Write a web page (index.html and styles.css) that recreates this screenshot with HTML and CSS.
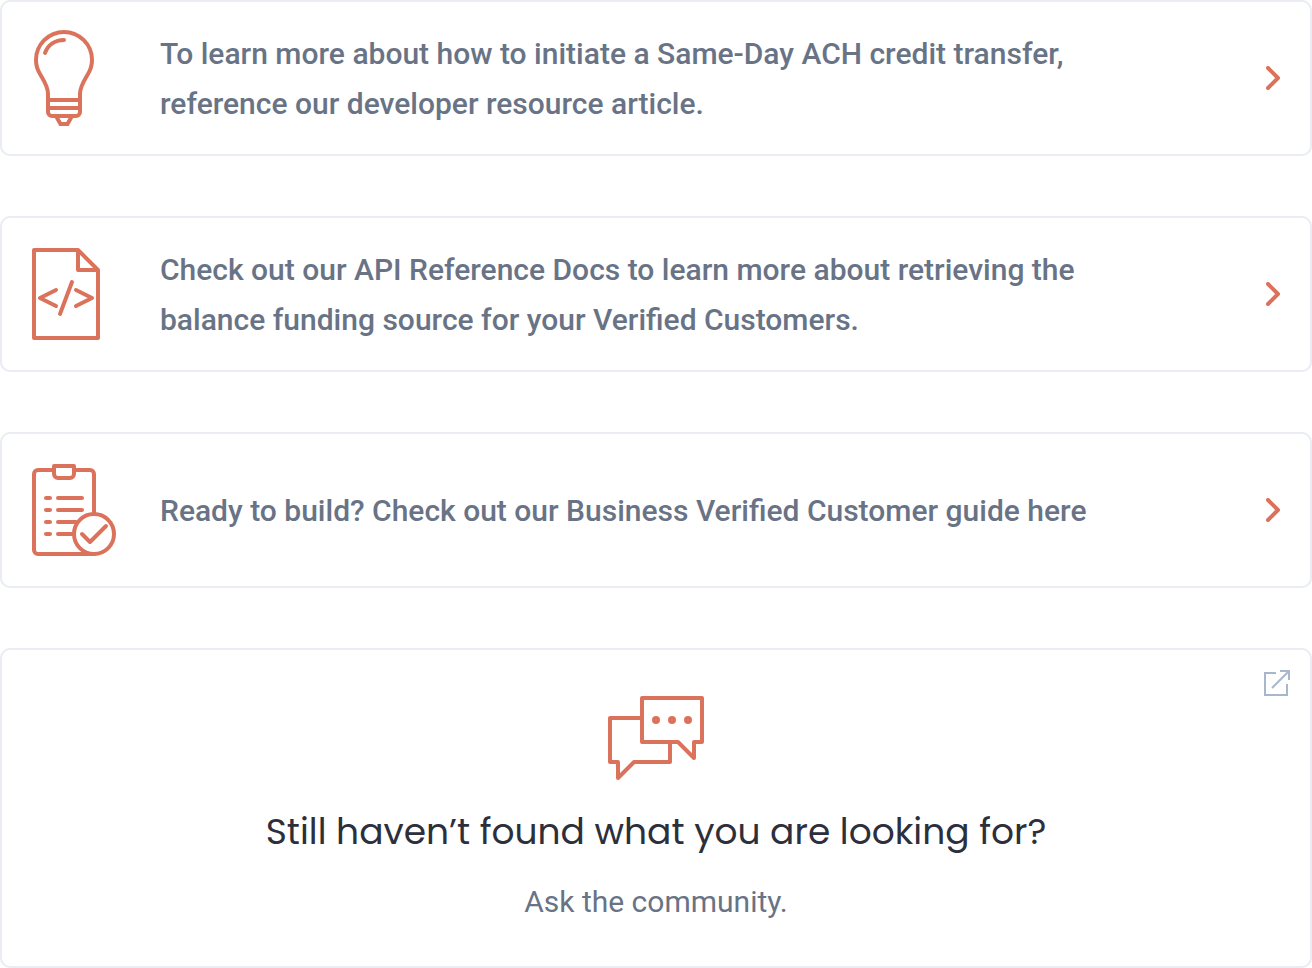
FILE: index.html
```html
<!DOCTYPE html>
<html lang="en">

<head>
    <meta charset="UTF-8">
    <meta name="viewport" content="width=device-width, initial-scale=1.0">
    <title>Resources</title>
    <link rel="stylesheet" href="styles.css">
</head>

<body>
    <main class="resources">
        <a class="card" href="#ach">
            <span class="card-icon">
                <svg class="icon" width="96" height="100" viewBox="0 0 96 100" aria-hidden="true">
                    <path d="M16 72V66C16 58 12 53 8 46C5 41 4 37 4 32a28 28 0 0 1 56 0C60 37 59 41 56 46C52 53 48 58 48 66V84a4 4 0 0 1-4 4H20a4 4 0 0 1-4-4V72H48M16 80H48" />
                    <path d="M24 88L28.500 96H35.500L40 88" />
                    <path class="round" d="M32 12C23 12 16 17 13 25" />
                </svg>
            </span>
            <span class="card-text">To learn more about how to initiate a Same-Day ACH credit transfer, reference our developer resource article.</span>
            <svg class="icon round chevron" width="14" height="24" viewBox="0 0 14 24" aria-hidden="true">
                <path d="M2 2L12 12L2 22" />
            </svg>
        </a>

        <a class="card" href="#api">
            <span class="card-icon">
                <svg class="icon round" width="96" height="100" viewBox="0 0 96 100" aria-hidden="true">
                    <path d="M46 6H2V94H66V26L46 6V26H66" />
                    <path d="M24 46L8 54L24 62M44 46L60 54L44 62M40 38L28 70" />
                </svg>
            </span>
            <span class="card-text">Check out our API Reference Docs to learn more about retrieving the balance funding source for your Verified Customers.</span>
            <svg class="icon round chevron" width="14" height="24" viewBox="0 0 14 24" aria-hidden="true">
                <path d="M2 2L12 12L2 22" />
            </svg>
        </a>

        <a class="card" href="#guide">
            <span class="card-icon">
                <svg class="icon round" width="96" height="100" viewBox="0 0 96 100" aria-hidden="true">
                    <path d="M22 10H6a4 4 0 0 0-4 4V90a4 4 0 0 0 4 4H62M42 10H58a4 4 0 0 1 4 4V54" />
                    <path d="M22 6H42V14a4 4 0 0 1-4 4H26a4 4 0 0 1-4-4Z" />
                    <path d="M14 38H18M26 38H50M14 50H18M26 50H50M14 62H18M26 62H44M14 74H18M26 74H41" />
                    <circle cx="62" cy="74" r="20" />
                    <path d="M50 74L58 82L74 66" />
                </svg>
            </span>
            <span class="card-text">Ready to build? Check out our Business Verified Customer guide here</span>
            <svg class="icon round chevron" width="14" height="24" viewBox="0 0 14 24" aria-hidden="true">
                <path d="M2 2L12 12L2 22" />
            </svg>
        </a>

        <a class="card community" href="#community">
            <svg class="external" width="26" height="26" viewBox="0 0 26 26" aria-hidden="true">
                <path d="M12 3H1V25H23V14M8 18L25 1M16 1H25V10" />
            </svg>
            <svg class="icon round" width="96" height="84" viewBox="0 0 96 84" aria-hidden="true">
                <path d="M34 2H94V46H86V62L70 46H34Z" />
                <path d="M34 22H2V66H10V82L26 66H62V46" />
                <g class="dots">
                    <circle cx="48" cy="24" r="4" />
                    <circle cx="64" cy="24" r="4" />
                    <circle cx="80" cy="24" r="4" />
                </g>
            </svg>
            <h2 class="community-title">Still haven’t found what you are looking for?</h2>
            <p class="community-text">Ask the community.</p>
        </a>
    </main>
</body>

</html>
```
FILE: styles.css
```css
* {
    box-sizing: border-box;
}

body {
    margin: 0;
    background-color: #fff;
    font-family: Roboto, "Liberation Sans", sans-serif;
    font-size: 30px;
    line-height: 50px;
    color: #697386;
}

.resources {
    display: flex;
    flex-direction: column;
    gap: 60px;
}

.card {
    display: flex;
    align-items: center;
    padding: 25px 30px;
    border: 2px solid #e9ecf3;
    border-radius: 10px;
    color: inherit;
    text-decoration: none;
}

.card-icon {
    display: flex;
    flex: none;
    width: 128px;
    padding: 1px 0;
}

.card-text {
    flex: 1;
    padding: 2px 100px 0 0;
    font-weight: 500;
}

.icon {
    flex: none;
    fill: none;
    stroke: #db735c;
    stroke-width: 4;
}

.round {
    stroke-linecap: round;
    stroke-linejoin: round;
}

.dots {
    fill: #db735c;
    stroke: none;
}

/* community card */
.community {
    position: relative;
    flex-direction: column;
    padding: 46px 30px 39px;
}

.external {
    position: absolute;
    top: 20px;
    right: 20px;
    fill: none;
    stroke: #a9b7cc;
    stroke-width: 2;
}

.community-title {
    margin: 25px 0 18px;
    font-family: Poppins, Inter, sans-serif;
    font-size: 36px;
    font-weight: 400;
    line-height: 54px;
    color: #2d2f3b;
}

.community-text {
    margin: 0;
}
```
